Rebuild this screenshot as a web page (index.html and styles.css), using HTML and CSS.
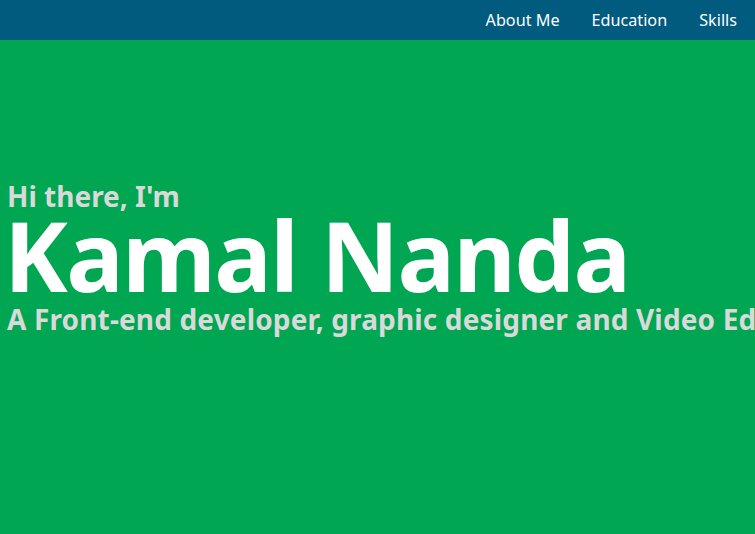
FILE: index.html
```html
<!DOCTYPE html>
<html lang="en">
<head>
<meta charset="utf-8">
<title>Kamal Nanda</title>
<link rel="stylesheet" href="styles.css">
</head>
<body>
<header class="topbar">
  <nav class="nav">
    <a class="nav-link" href="#about">About Me</a>
    <a class="nav-link" href="#education">Education</a>
    <a class="nav-link" href="#skills">Skills</a>
  </nav>
</header>
<main class="hero">
  <div class="intro">
    <p class="greeting">Hi there, I'm</p>
    <h1 class="name">Kamal Nanda</h1>
    <p class="tagline">A Front-end developer, graphic designer and Video Editor</p>
  </div>
</main>
</body>
</html>
```
FILE: styles.css
```css
html, body {
  margin: 0;
  padding: 0;
  height: 100%;
  overflow: hidden;
}
body {
  font-family: "Noto Sans", "Open Sans", sans-serif;
  background: #00a651;
}
.topbar {
  height: 40px;
  background: #005b7f;
  display: flex;
  justify-content: flex-end;
  align-items: center;
}
.nav {
  display: flex;
  padding-right: 2px;
}
.nav-link {
  color: #ffffff;
  text-decoration: none;
  font-size: 16.2px;
  padding: 0 16px;
}
.hero {
  height: calc(100% - 40px);
  background: #00a651;
  overflow: hidden;
}
.intro {
  padding: 139px 0 0 7px;
  white-space: nowrap;
}
.greeting {
  margin: 0;
  color: #d9d9d9;
  font-weight: 700;
  font-size: 28px;
  line-height: 34px;
}
.name {
  margin: 0 0 0 -3px;
  color: #ffffff;
  font-weight: 700;
  font-size: 96px;
  letter-spacing: -1.5px;
  line-height: 84px;
}
.tagline {
  margin: 5px 0 0;
  color: #d9d9d9;
  font-weight: 700;
  font-size: 28px;
  letter-spacing: 0.15px;
  line-height: 34px;
}
```
